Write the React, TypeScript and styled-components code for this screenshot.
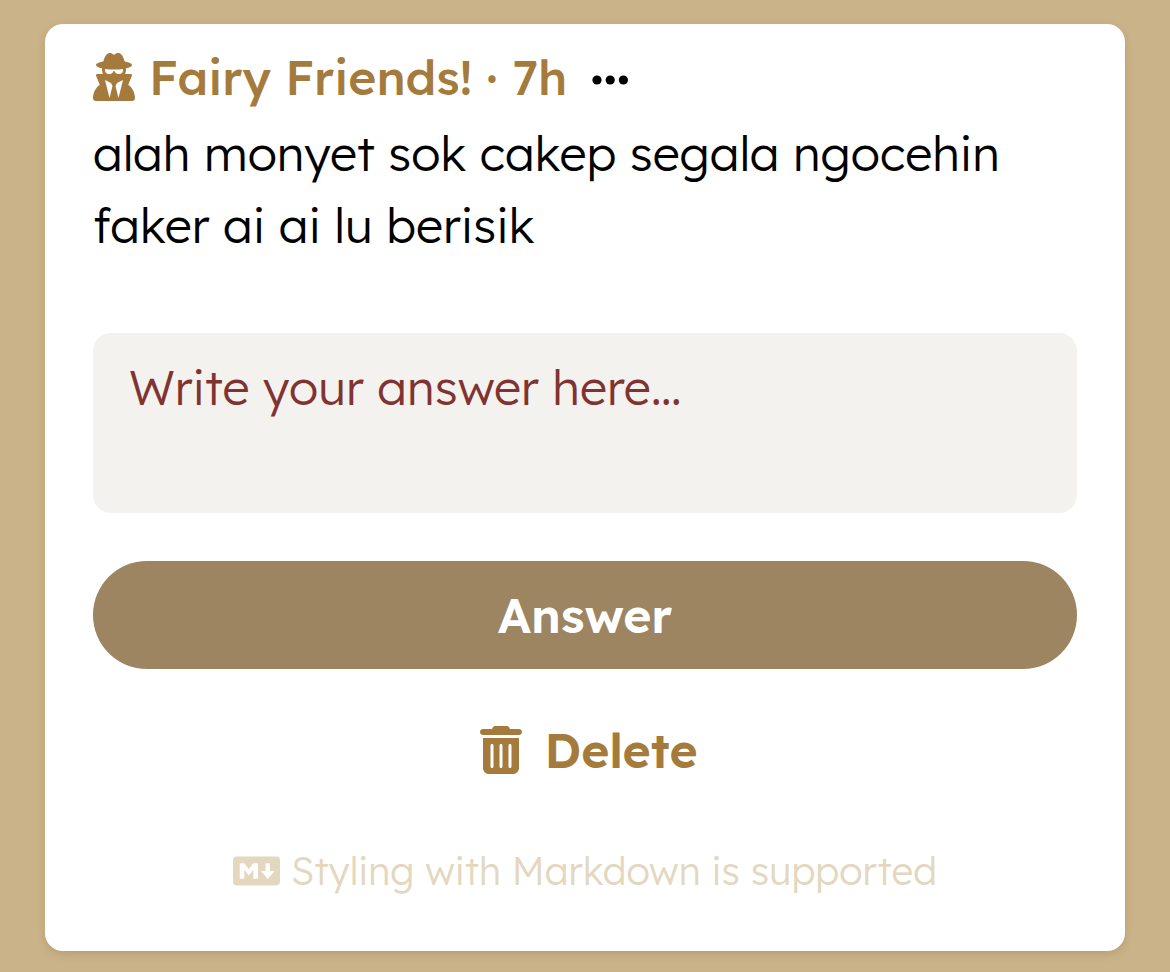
import styled, { createGlobalStyle, css } from 'styled-components'
import { FaMarkdown, FaTrashCan, FaUserSecret } from 'react-icons/fa6'

const GlobalStyle = createGlobalStyle`
  * {
    box-sizing: border-box;
  }

  body {
    margin: 0;
    background: #cbb389;
    font-family: Lexend, Inter, 'Open Sans', sans-serif;
  }
`

const TextCSS = css`
  font-family: inherit;
  font-size: 48px;
  line-height: 72px;
`

const IconCSS = css`
  flex: none;
  width: 42px;
  height: 48px;
`

const Page = styled.main`
  min-height: 972px;
  padding: 24px 45px 21px;
`

const Card = styled.article`
  display: flex;
  flex-direction: column;
  height: 927px;
  padding: 17px 48px 0;
  border-radius: 18px;
  background: #fff;
  box-shadow: 0 3px 9px rgba(110, 80, 30, 0.2);
`

const Header = styled.header`
  display: flex;
  align-items: center;
  height: 72px;
  color: #a57b3d;
`

const AnonymousIcon = styled(FaUserSecret)`
  ${IconCSS}
`

const Author = styled.h1`
  ${TextCSS}
  margin: 0 0 0 14px;
  font-weight: 500;
  white-space: nowrap;
`

const MoreButton = styled.button`
  display: flex;
  margin-left: 21px;
  padding: 6px 0 0;
  border: 0;
  background: none;
  color: #000;
`

const Question = styled.p`
  ${TextCSS}
  margin: 4px 0 72px;
  color: #000;
  font-weight: 300;
`

const AnswerField = styled.textarea`
  ${TextCSS}
  display: block;
  width: 100%;
  height: 180px;
  padding: 18px 36px;
  border: 0;
  border-radius: 18px;
  outline: 0;
  resize: none;
  background: #f3f2ee;
  font-weight: 300;

  &::placeholder {
    color: #803331;
    opacity: 1;
  }
`

const Button = styled.button`
  ${TextCSS}
  display: flex;
  align-items: center;
  justify-content: center;
  padding: 0;
  border: 0;
  font-weight: 600;
`

const SubmitButton = styled(Button)`
  height: 108px;
  margin-top: 48px;
  border-radius: 54px;
  background: #9c8560;
  color: #fff;
`

const DeleteButton = styled(Button)`
  gap: 22px;
  height: 72px;
  margin-top: 45px;
  padding-left: 8px;
  background: none;
  color: #a57b3d;
`

const TrashIcon = styled(FaTrashCan)`
  ${IconCSS}
`

const MarkdownHint = styled.p`
  display: flex;
  align-items: center;
  justify-content: center;
  gap: 11px;
  height: 60px;
  margin: 55px 0 0;
  color: #e4d7bf;
  font-size: 38.4px;
  font-weight: 300;
  white-space: nowrap;

  svg {
    flex: none;
    width: 47px;
    height: 38px;
  }
`

const MoreIcon = () => (
  <svg width="44" height="12" viewBox="0 0 44 12" fill="currentColor">
    <circle cx="9" cy="6" r="4.6" />
    <circle cx="22.2" cy="6" r="4.6" />
    <circle cx="35.4" cy="6" r="4.6" />
  </svg>
)

const App = () => (
  <>
    <GlobalStyle />
    <Page>
      <Card>
        <Header>
          <AnonymousIcon />
          <Author>Fairy Friends! · 7h</Author>
          <MoreButton aria-label="More">
            <MoreIcon />
          </MoreButton>
        </Header>
        <Question>alah monyet sok cakep segala ngocehin faker ai ai lu berisik</Question>
        <AnswerField placeholder="Write your answer here…" />
        <SubmitButton>Answer</SubmitButton>
        <DeleteButton>
          <TrashIcon />
          Delete
        </DeleteButton>
        <MarkdownHint>
          <FaMarkdown />
          Styling with Markdown is supported
        </MarkdownHint>
      </Card>
    </Page>
  </>
)

export default App
